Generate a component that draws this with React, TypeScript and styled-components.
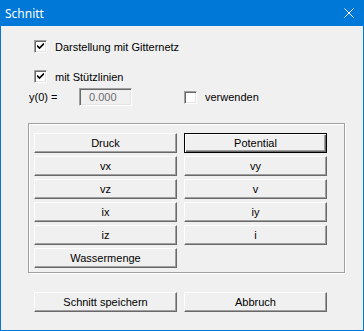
import React, { useState } from 'react'
import styled, { createGlobalStyle } from 'styled-components'

const GlobalStyle = createGlobalStyle`
    html, body {
        margin: 0;
        padding: 0;
        background: #f0f0f0;
    }
    * {
        box-sizing: border-box;
    }
`

const Window = styled.div`
    width: 364px;
    height: 331px;
    display: flex;
    flex-direction: column;
    border: 1px solid #0078d7;
    border-top: none;
    background: #f0f0f0;
    font-family: "Liberation Sans", Arial, sans-serif;
    font-size: 11px;
    color: #000;
`

const TitleBar = styled.div`
    height: 26px;
    flex: none;
    display: flex;
    align-items: center;
    justify-content: space-between;
    background: #0078d7;
    color: #fff;
    padding: 0 10px 0 4px;
    margin: 0 -1px;
`

const Title = styled.span`
    font-family: "Noto Sans", "Open Sans", sans-serif;
    font-size: 12px;
    padding-left: 1px;
`

const CloseIcon = styled.svg`
    width: 10px;
    height: 10px;
    display: block;
`

const Body = styled.div`
    flex: 1;
    display: flex;
    flex-direction: column;
    padding: 14px 0 0 27px;
`

const CheckRow = styled.label<{ $top?: number }>`
    display: flex;
    align-items: center;
    height: 13px;
    margin-left: 6px;
    margin-top: ${p => p.$top ?? 0}px;
    gap: 8px;
`

const Box = styled.span`
    width: 13px;
    height: 13px;
    flex: none;
    display: grid;
    place-items: center;
    background: #fff;
    border: 1px solid;
    border-color: #a0a0a0 #fff #fff #a0a0a0;
    box-shadow: inset 1px 1px 0 #696969, inset -1px -1px 0 #e3e3e3;
`

const ValueRow = styled.div`
    display: flex;
    align-items: center;
    margin-top: 5px;
    height: 18px;
`

const ValueLabel = styled.span`
    width: 50px;
    margin-left: 1px;
`

const ValueInput = styled.div`
    width: 53px;
    height: 18px;
    display: flex;
    align-items: center;
    padding-left: 9px;
    color: #6d6d6d;
    background: #f0f0f0;
    border: 1px solid;
    border-color: #a0a0a0 #fff #fff #a0a0a0;
    box-shadow: inset 1px 1px 0 #696969, inset -1px -1px 0 #e3e3e3;
`

const Group = styled.div`
    width: 317px;
    margin-top: 17px;
    padding: 9px 5px 4px 5px;
    border: 1px solid #a0a0a0;
    box-shadow: 1px 1px 0 #fff, inset 1px 1px 0 #fff;
`

const ButtonGrid = styled.div<{ $left?: number }>`
    display: grid;
    grid-template-columns: 143px 143px;
    grid-auto-rows: 20px;
    column-gap: 7px;
    row-gap: 3px;
    margin-left: ${p => p.$left ?? 0}px;
`

const Button = styled.button<{ $default?: boolean }>`
    font: inherit;
    color: #000;
    padding: 0;
    background: #f0f0f0;
    border: 1px solid;
    border-color: #fff #696969 #696969 #fff;
    box-shadow: inset -1px -1px 0 #a0a0a0, inset 1px 1px 0 #f0f0f0;
    outline: ${p => (p.$default ? '1px solid #000' : 'none')};
    outline-offset: -1px;
    ${p =>
        p.$default &&
        `
        border-color: #000;
        box-shadow: inset 1px 1px 0 #fff, inset -1px -1px 0 #696969, inset -2px -2px 0 #a0a0a0;
    `}
`

const Footer = styled(ButtonGrid)`
    margin-top: 19px;
`

const Check = ({ on }: { on: boolean }) => (
    <Box>
        {on && (
            <svg width="7" height="7" viewBox="0 0 7 7">
                <path d="M0 2.5 L2.5 5 L7 0.5" stroke="#000" strokeWidth="1.6" fill="none" />
            </svg>
        )}
    </Box>
)

const results = ['Druck', 'Potential', 'vx', 'vy', 'vz', 'v', 'ix', 'iy', 'iz', 'i', 'Wassermenge']

const App = () => {
    const [grid, setGrid] = useState(true)
    const [support, setSupport] = useState(true)
    const [useY, setUseY] = useState(false)

    return (
        <Window>
            <GlobalStyle />
            <TitleBar>
                <Title>Schnitt</Title>
                <CloseIcon viewBox="0 0 10 10">
                    <path d="M0.5 0.5 L9.5 9.5 M9.5 0.5 L0.5 9.5" stroke="#fff" strokeWidth="1" />
                </CloseIcon>
            </TitleBar>
            <Body>
                <CheckRow onClick={() => setGrid(!grid)}>
                    <Check on={grid} />
                    Darstellung mit Gitternetz
                </CheckRow>
                <CheckRow $top={17} onClick={() => setSupport(!support)}>
                    <Check on={support} />
                    mit Stützlinien
                </CheckRow>
                <ValueRow>
                    <ValueLabel>y(0) =</ValueLabel>
                    <ValueInput>0.000</ValueInput>
                    <CheckRow style={{ marginLeft: 52 }} onClick={() => setUseY(!useY)}>
                        <Check on={useY} />
                        verwenden
                    </CheckRow>
                </ValueRow>
                <Group>
                    <ButtonGrid>
                        {results.map(r => (
                            <Button key={r} $default={r === 'Potential'}>
                                {r}
                            </Button>
                        ))}
                    </ButtonGrid>
                </Group>
                <Footer $left={6}>
                    <Button>Schnitt speichern</Button>
                    <Button>Abbruch</Button>
                </Footer>
            </Body>
        </Window>
    )
}

export default App
